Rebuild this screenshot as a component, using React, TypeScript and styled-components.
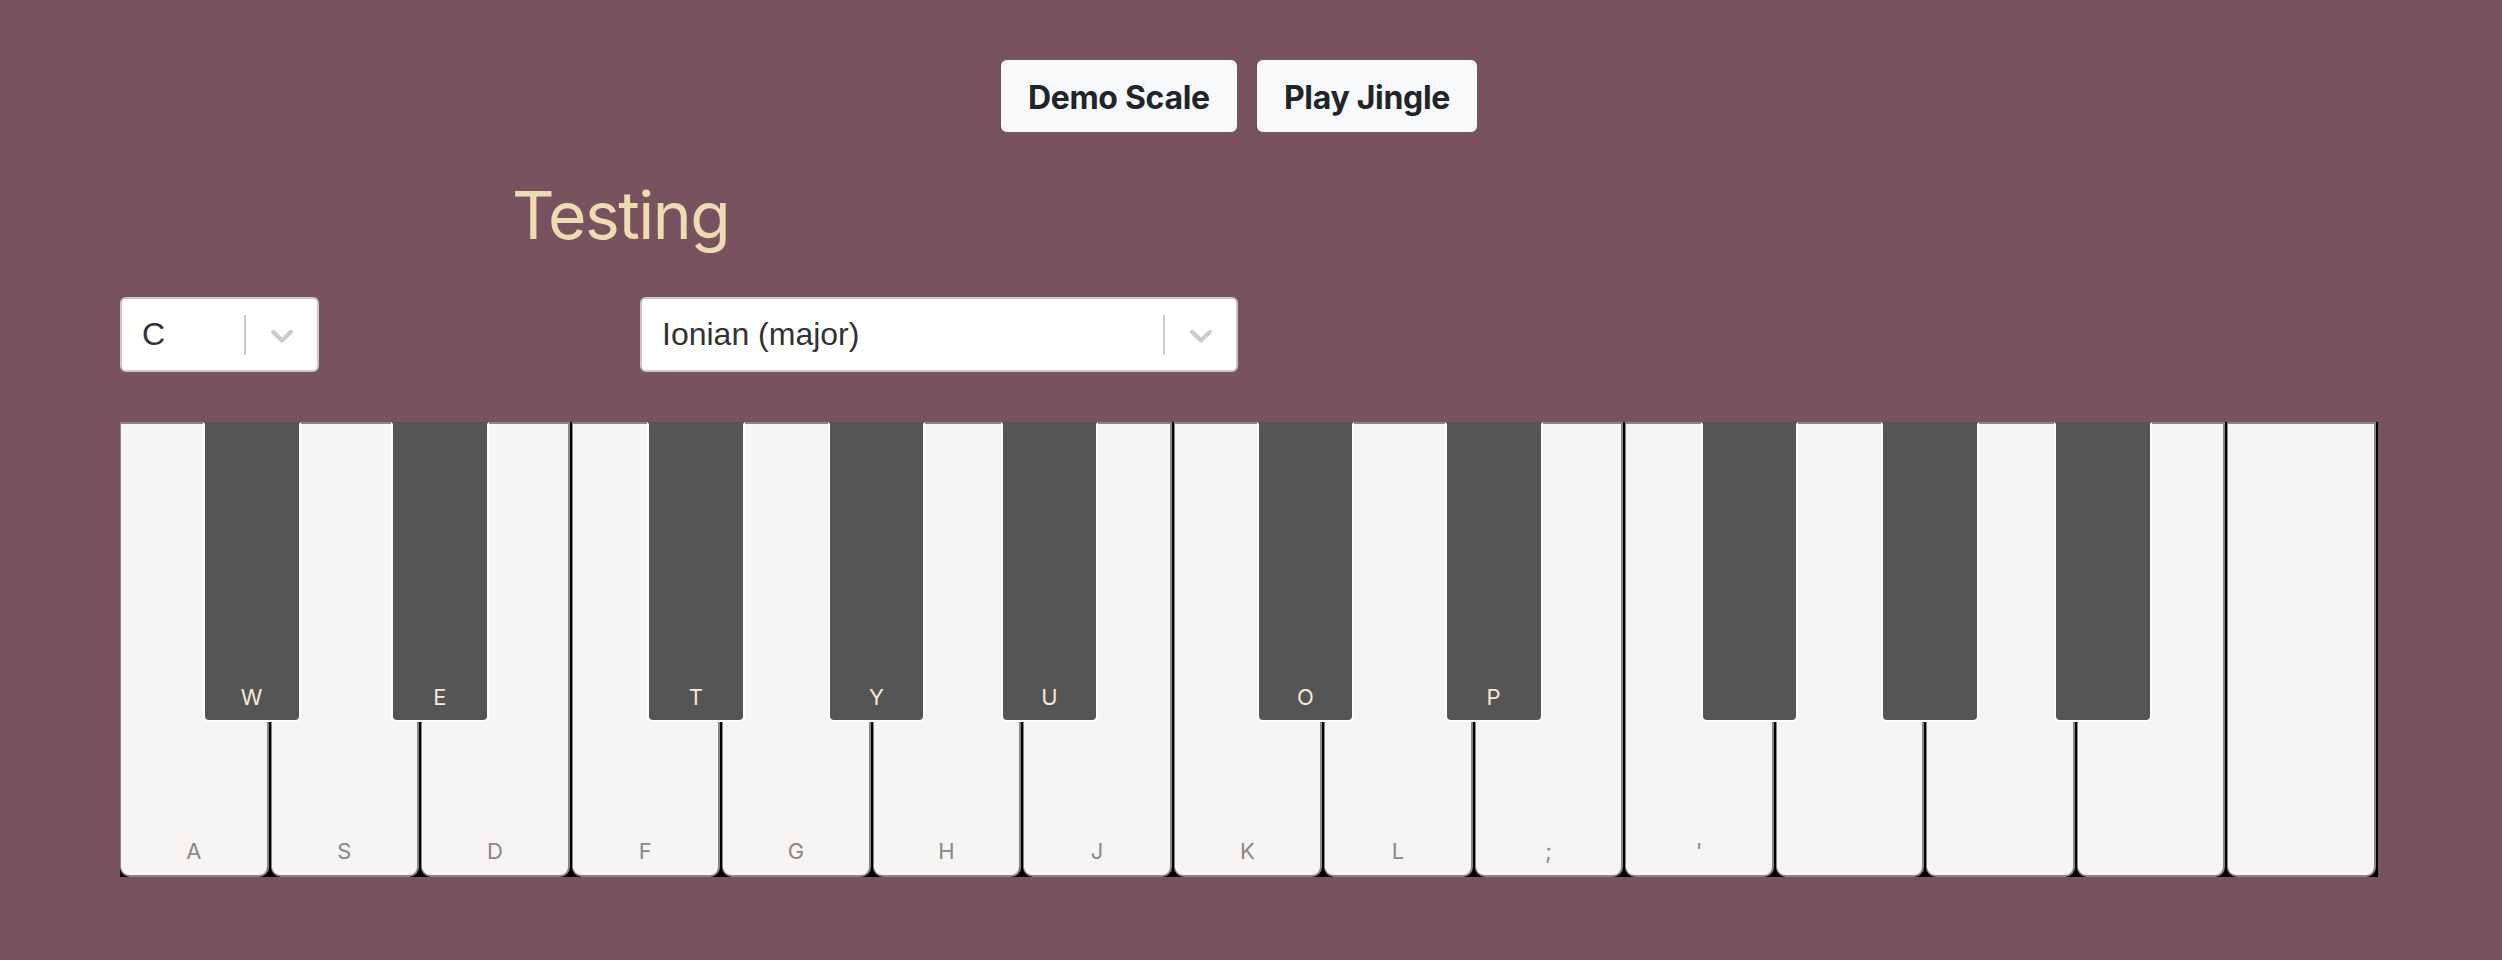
import styled, { createGlobalStyle } from "styled-components";

const GlobalStyle = createGlobalStyle`
  html, body {
    margin: 0;
    padding: 0;
    background-color: #78525e;
  }
  * {
    box-sizing: border-box;
  }
`;

const NATURALS = ["A", "S", "D", "F", "G", "H", "J", "K", "L", ";", "'", "", "", "", ""];

// position in natural-key units, like react-piano does it
const ACCIDENTALS = [
  { pos: 0.55, label: "W" },
  { pos: 1.8, label: "E" },
  { pos: 3.5, label: "T" },
  { pos: 4.7, label: "Y" },
  { pos: 5.85, label: "U" },
  { pos: 7.55, label: "O" },
  { pos: 8.8, label: "P" },
  { pos: 10.5, label: "" },
  { pos: 11.7, label: "" },
  { pos: 12.85, label: "" },
];

const Chevron = () => (
  <svg width="38" height="38" viewBox="0 0 20 20" fill="#cccccc">
    <path d="M4.516 7.548c0.436-0.446 1.043-0.481 1.576 0l3.908 3.747 3.908-3.747c0.533-0.481 1.141-0.446 1.574 0 0.436 0.445 0.408 1.197 0 1.615-0.406 0.418-4.695 4.502-4.695 4.502-0.217 0.223-0.502 0.335-0.787 0.335s-0.57-0.112-0.789-0.335c0 0-4.287-4.084-4.695-4.502s-0.436-1.17 0-1.615z" />
  </svg>
);

type SelectProps = {
  value: string;
  width: number;
};

const Select: React.FC<SelectProps> = ({ value, width }) => {
  return (
    <SelectControl width={width}>
      <SelectValue>{value}</SelectValue>
      <Separator />
      <Indicator>
        <Chevron />
      </Indicator>
    </SelectControl>
  );
};

const App = () => {
  const n = NATURALS.length;
  const keyW = 100 / n;
  return (
    <Root>
      <GlobalStyle />
      <ButtonRow>
        <Button>Demo Scale</Button>
        <Button>Play Jingle</Button>
      </ButtonRow>
      <Title>Testing</Title>
      <SelectRow>
        <Select value="C" width={199} />
        <Select value="Ionian (major)" width={598} />
      </SelectRow>
      <Keyboard>
        {NATURALS.map((label, i) => (
          <NaturalKey key={i}>
            <LabelWrap>
              <NaturalLabel>{label}</NaturalLabel>
            </LabelWrap>
          </NaturalKey>
        ))}
        {ACCIDENTALS.map((a, i) => (
          <AccidentalKey
            key={i}
            style={{ left: `${a.pos * keyW}%`, width: `${0.65 * keyW}%` }}
          >
            <LabelWrap>
              <AccidentalLabel>{a.label}</AccidentalLabel>
            </LabelWrap>
          </AccidentalKey>
        ))}
      </Keyboard>
    </Root>
  );
};

export default App;

const Root = styled.div`
  padding: 60px 124px 60px 120px;
  min-height: 960px;
  background-color: #78525e;
`;

const ButtonRow = styled.div`
  display: flex;
  justify-content: center;
`;

const Button = styled.div`
  height: 72px;
  padding: 3px 27px 0;
  margin-right: 20px;
  display: flex;
  align-items: center;
  background-color: #f8f9fa;
  border-radius: 6px;
  color: #212529;
  font-family: Inter, "Liberation Sans", sans-serif;
  font-weight: 700;
  font-size: 32px;
  letter-spacing: -0.3px;
`;

const Title = styled.div`
  margin: 43px 0 0 392px;
  height: 80px;
  line-height: 80px;
  color: #eddbb2;
  font-family: Inter, "Liberation Sans", sans-serif;
  font-weight: 400;
  font-size: 66px;
  letter-spacing: -1.5px;
`;

const SelectRow = styled.div`
  display: flex;
  gap: 321px;
  margin-top: 42px;
`;

const SelectControl = styled.div<{ width: number }>`
  width: ${({ width }) => width}px;
  height: 75px;
  display: flex;
  align-items: center;
  background-color: #fff;
  border: 2px solid #c8c8c8;
  border-radius: 6px;
`;

const SelectValue = styled.div`
  flex: 1;
  padding-left: 20px;
  color: #333;
  font-family: "Liberation Sans", Arial, sans-serif;
  font-size: 32px;
`;

const Separator = styled.div`
  width: 2px;
  height: 40px;
  background-color: #cccccc;
`;

const Indicator = styled.div`
  width: 71px;
  display: flex;
  justify-content: center;
  align-items: center;
`;

const Keyboard = styled.div`
  position: relative;
  display: flex;
  margin-top: 50px;
  height: 455px;
  background-color: #000;
`;

const NaturalKey = styled.div`
  flex: 1;
  display: flex;
  margin-right: 2px;
  background-color: #f6f5f3;
  border: 2px solid #888;
  border-left-width: 1px;
  border-radius: 0 0 10px 10px;

  &:last-of-type {
    margin-right: 0;
  }
`;

const AccidentalKey = styled.div`
  position: absolute;
  top: 0;
  height: 66%;
  display: flex;
  z-index: 1;
  background-color: #555;
  border: 2px solid #fff;
  border-top: 2px solid transparent;
  border-radius: 0 0 6px 6px;
`;

const LabelWrap = styled.div`
  flex: 1;
  align-self: flex-end;
`;

const NaturalLabel = styled.div`
  margin-bottom: 10px;
  text-align: center;
  color: #888;
  font-family: Inter, "Liberation Sans", sans-serif;
  font-size: 22px;
  min-height: 27px;
`;

const AccidentalLabel = styled.div`
  margin-bottom: 9px;
  text-align: center;
  color: #f8e8d5;
  font-family: Inter, "Liberation Sans", sans-serif;
  font-size: 22px;
  min-height: 27px;
`;
